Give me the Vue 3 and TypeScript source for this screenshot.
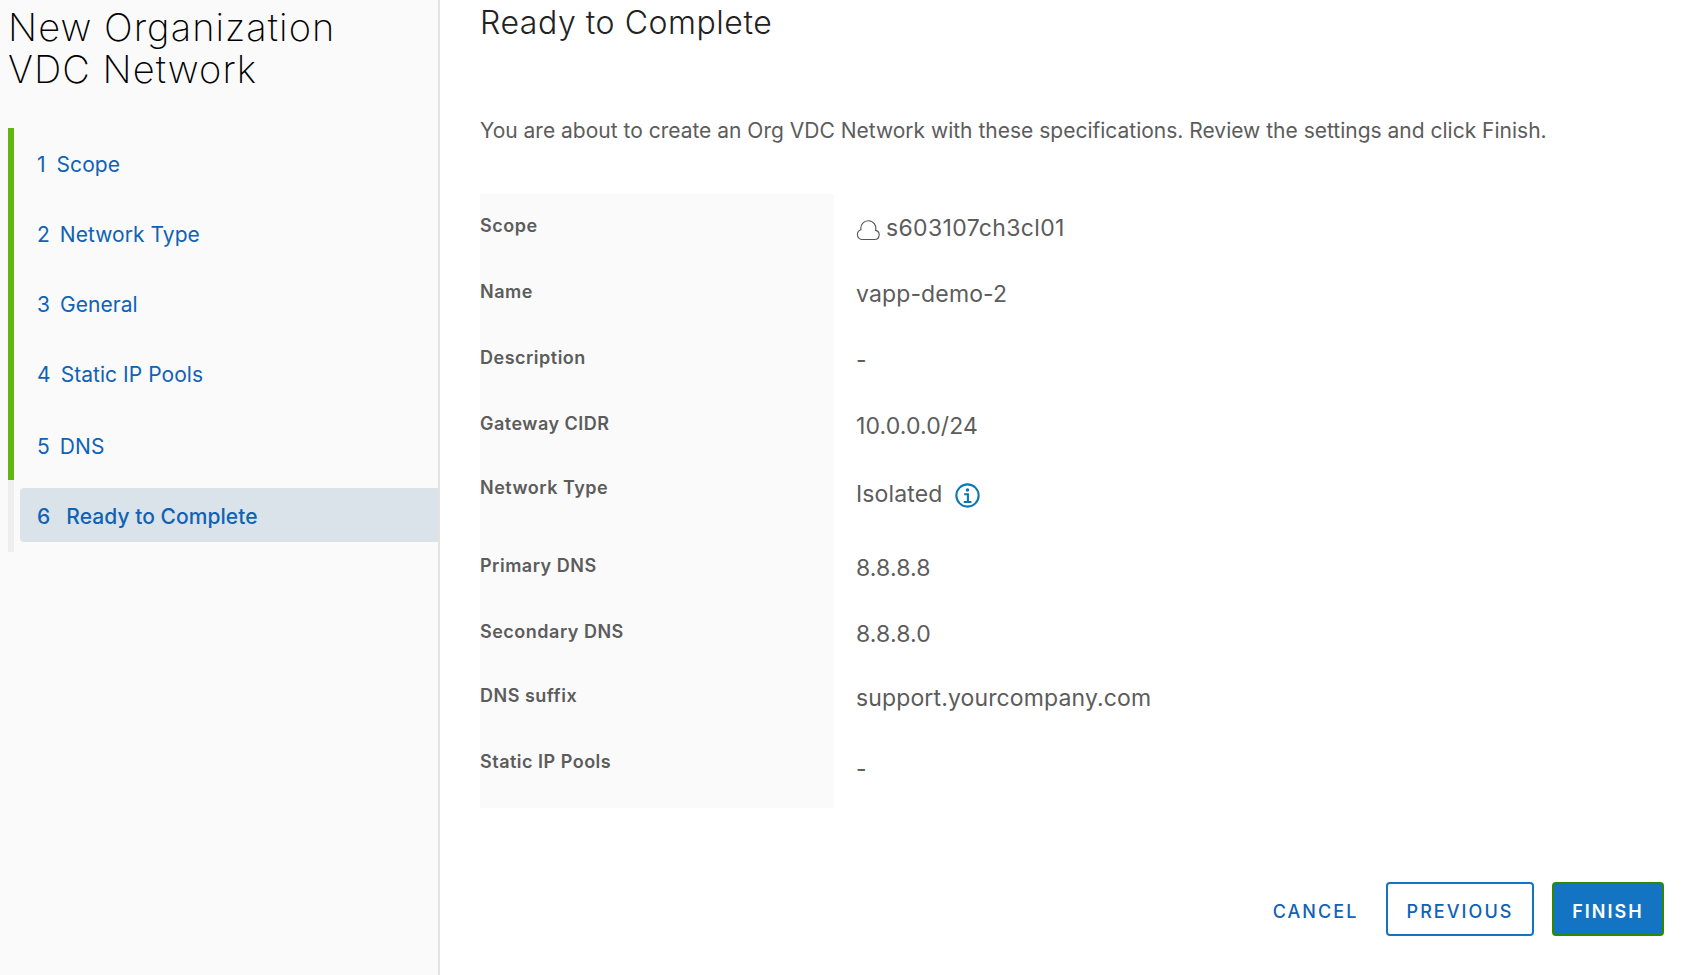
<script setup lang="ts">
const steps = ['Scope', 'Network Type', 'General', 'Static IP Pools', 'DNS']
interface Row { label: string; value: string; icon?: string; kind: string }
const rows: Row[] = [
  { label: 'Scope', value: 's603107ch3cl01', icon: 'cloud', kind: 'r-scope' },
  { label: 'Name', value: 'vapp-demo-2', kind: 'r-std' },
  { label: 'Description', value: '-', kind: 'r-desc' },
  { label: 'Gateway CIDR', value: '10.0.0.0/24', kind: 'r-gw' },
  { label: 'Network Type', value: 'Isolated', icon: 'info', kind: 'r-type' },
  { label: 'Primary DNS', value: '8.8.8.8', kind: 'r-dns1' },
  { label: 'Secondary DNS', value: '8.8.8.0', kind: 'r-dns2' },
  { label: 'DNS suffix', value: 'support.yourcompany.com', kind: 'r-suffix' },
  { label: 'Static IP Pools', value: '-', kind: 'r-pools' },
]
</script>

<template>
  <div class="page">
    <aside class="side">
      <h1 class="title">New Organization<br />VDC Network</h1>
      <nav class="steps">
        <div v-for="(s, i) in steps" :key="s" class="step">
          <span class="num">{{ i + 1 }}</span><span>{{ s }}</span>
        </div>
        <div class="step last">
          <div class="active"><span class="num">6</span><span>Ready to Complete</span></div>
        </div>
      </nav>
    </aside>
    <main class="main">
      <h2 class="heading">Ready to Complete</h2>
      <p class="intro">You are about to create an Org VDC Network with these specifications. Review the settings and click Finish.</p>
      <div class="table">
        <div v-for="r in rows" :key="r.label" class="row" :class="r.kind">
          <div class="label">{{ r.label }}</div>
          <div class="value">
            <svg v-if="r.icon === 'cloud'" class="cloud" viewBox="0 0 24 24" width="24" height="24" fill="none" stroke="#565656" stroke-width="1.1">
              <path d="M5.5 22.5h13a4.6 4.6 0 0 0 1-9.1A7.5 7.5 0 1 0 5 12.8a5 5 0 0 0 .5 9.7z" />
            </svg>
            <span>{{ r.value }}</span>
            <svg v-if="r.icon === 'info'" class="info" viewBox="0 0 24 24" width="25" height="25" fill="none" stroke="#0a78b4">
              <circle cx="12" cy="12" r="10.7" stroke-width="2" />
              <circle cx="12" cy="6.8" r="1.7" fill="#0a78b4" stroke="none" />
              <path d="M8.8 10.8h3.6v7.2M8.4 18.2h7.4" stroke-width="2" />
            </svg>
          </div>
        </div>
      </div>
      <div class="actions">
        <button class="btn link">CANCEL</button>
        <button class="btn outline">PREVIOUS</button>
        <button class="btn primary">FINISH</button>
      </div>
    </main>
  </div>
</template>

<style>
html, body { margin: 0; background: #fff; }
</style>

<style scoped>
.page {
  display: flex;
  height: 975px;
  overflow: hidden;
  font-family: Inter, "Liberation Sans", sans-serif;
  color: #5c5c5c;
}
.side {
  width: 438px;
  flex: none;
  background: #fafafa;
  border-right: 2px solid #e3e3e3;
}
.title {
  margin: 6px 0 0 8px;
  font-size: 38px;
  line-height: 42px;
  font-weight: 200;
  letter-spacing: 1.05px;
  color: #000;
}
.steps {
  margin: 38px 0 0 8px;
  border-left: 6px solid #eeeeee;
  position: relative;
}
.steps::before {
  content: "";
  position: absolute;
  left: -6px;
  top: 0;
  width: 6px;
  height: 352px;
  background: #60b515;
}
.step {
  height: 70px;
  box-sizing: border-box;
  padding: 2px 0 0 23px;
  display: flex;
  align-items: center;
  font-size: 21px;
  letter-spacing: 0.05px;
  color: #0f62b5;
}
.step:nth-child(5) { height: 72px; padding-top: 4px; }
.num { margin-right: 10px; }
.step:first-child .num { margin-right: 11px; }
.step.last {
  padding: 8px 0 10px 6px;
  height: 72px;
}
.active {
  flex: 1;
  height: 54px;
  display: flex;
  align-items: center;
  padding: 2px 0 0 17px;
  background: #dbe3ea;
  border-radius: 4px 0 0 4px;
  font-weight: 500;
  box-sizing: border-box;
}
.active .num { margin-right: 16px; }
.main {
  flex: 1;
  padding-left: 40px;
  min-width: 0;
}
.heading {
  margin: 0;
  height: 43px;
  padding-top: 1px;
  font-size: 32px;
  line-height: 44px;
  font-weight: 300;
  letter-spacing: 0.55px;
  color: #222;
}
.intro {
  margin: 64px 0 0;
  font-size: 21px;
  line-height: 46px;
  white-space: nowrap;
  height: 46px;
}
.table {
  margin-top: 40px;
  width: 1200px;
}
.row {
  display: flex;
  height: 66px;
}
.r-gw { height: 64px; }
.r-type { height: 78px; }
.r-dns2 { height: 64px; }
.r-pools { height: 78px; }
.label {
  width: 354px;
  flex: none;
  box-sizing: border-box;
  background: #fafafa;
  padding: 20px 0 0 0;
  font-size: 18px;
  line-height: 24px;
  font-weight: 600;
  letter-spacing: 0.5px;
}
.value {
  padding: 20px 0 0 22px;
  font-size: 23px;
  line-height: 28px;
  letter-spacing: 0.13px;
  display: flex;
  align-items: flex-start;
}
.r-scope .value { letter-spacing: 0.35px; }
.r-type .value { padding-top: 24px; }
.r-pools .value { padding-top: 25px; }
.cloud { margin: 3px 6px 0 0; }
.info { margin: 3px 0 0 13px; }
.actions {
  margin-top: 74px;
  display: flex;
  justify-content: flex-end;
  padding-right: 24px;
}
.btn {
  height: 54px;
  box-sizing: border-box;
  font-family: inherit;
  font-size: 18px;
  font-weight: 500;
  letter-spacing: 2.05px;
  border-radius: 4px;
  background: none;
  cursor: pointer;
  color: #0f62b5;
  border: 2px solid transparent;
  padding: 5px 0 0;
}
.link { width: 115px; margin-right: 13px; }
.outline { width: 148px; border-color: #1374c4; margin-right: 18px; }
.primary { width: 112px; background: #1374c4; border-color: #318700; color: #fff; font-weight: 600; }
</style>
